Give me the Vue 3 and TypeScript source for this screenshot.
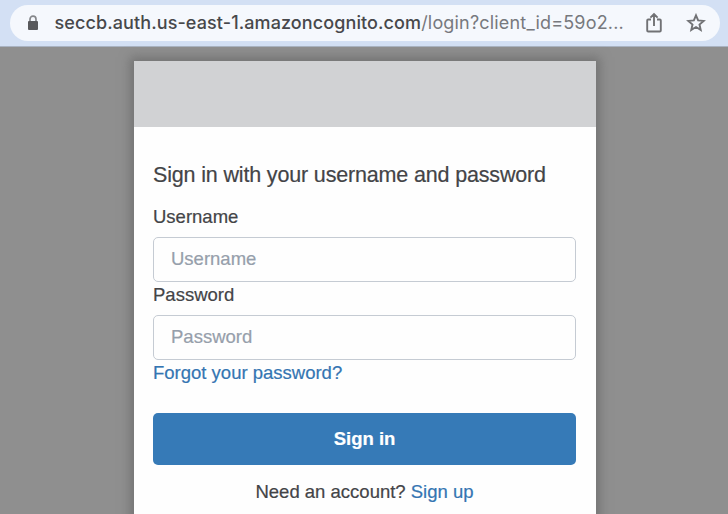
<script setup lang="ts">
import { ref } from 'vue'

const host = 'seccb.auth.us-east-1.amazoncognito.com'
const path = '/login?client_id=59o2...'
const username = ref('')
const password = ref('')
</script>

<template>
  <div class="window">
    <header class="toolbar">
      <div class="address">
        <svg class="lock" viewBox="0 0 12 16" width="12" height="16">
          <path d="M3 7V4.2a3 3 0 0 1 6 0V7" fill="none" stroke="#85878b" stroke-width="1.7" />
          <rect x="1" y="6" width="10" height="9" rx="1" fill="#58595c" />
        </svg>
        <div class="url"><span class="host">{{ host }}</span><span class="path">{{ path }}</span></div>
        <svg class="share" viewBox="0 0 18 22" width="18" height="22">
          <path d="M6 7.5H3.2a1 1 0 0 0-1 1v10a1 1 0 0 0 1 1h11.6a1 1 0 0 0 1-1v-10a1 1 0 0 0-1-1H12M9 14V2.5M5.4 5.6 9 2l3.6 3.6" fill="none" stroke="#717275" stroke-width="1.9" />
        </svg>
        <svg class="star" viewBox="0 0 20 20" width="20" height="20">
          <path d="m10 2.3 2.15 5.1 5.5.48-4.17 3.63 1.25 5.4L10 14.05l-4.73 2.86 1.25-5.4L2.35 7.88l5.5-.48Z" fill="none" stroke="#717275" stroke-width="1.9" />
        </svg>
      </div>
    </header>
    <main class="page">
      <section class="card">
        <div class="banner"></div>
        <form class="form" @submit.prevent>
          <h1 class="title">Sign in with your username and password</h1>
          <label class="label" for="username">Username</label>
          <input id="username" v-model="username" class="field" type="text" placeholder="Username" />
          <label class="label" for="password">Password</label>
          <input id="password" v-model="password" class="field" type="password" placeholder="Password" />
          <a class="link forgot" href="#">Forgot your password?</a>
          <button class="submit" type="submit">Sign in</button>
          <p class="signup">Need an account? <a class="link" href="#">Sign up</a></p>
        </form>
      </section>
    </main>
  </div>
</template>

<style>
body {
  margin: 0;
  overflow: hidden;
}
</style>

<style scoped>
.window {
  display: flex;
  flex-direction: column;
  width: 728px;
  height: 514px;
  overflow: hidden;
  font-family: "Liberation Sans", Arial, sans-serif;
  color: #434447;
  -webkit-text-stroke-width: 0.2px;
}
.toolbar {
  box-sizing: border-box;
  flex: none;
  height: 47px;
  padding: 5px 8px 5px 10px;
  background: #d3e0f4;
  border-bottom: 1px solid #a9b3c2;
}
.address {
  display: flex;
  align-items: center;
  box-sizing: border-box;
  height: 36px;
  padding: 0 14px 0 17px;
  border-radius: 18px;
  background: #f5f8fd;
}
.lock {
  flex: none;
  margin-right: 15.5px;
}
.url {
  flex: 1;
  font-family: Inter, Roboto, sans-serif;
  font-size: 18px;
  line-height: 36px;
  white-space: nowrap;
  -webkit-text-stroke-width: 0;
}
.host {
  color: #47484b;
  font-weight: 500;
  letter-spacing: 0.1px;
}
.path {
  color: #77797e;
  letter-spacing: 0.18px;
}
.share {
  flex: none;
  margin-right: 23px;
}
.star {
  flex: none;
}
.page {
  flex: 1;
  display: flex;
  justify-content: center;
  padding-top: 14px;
  background: #8f8f8f;
}
.card {
  width: 462.5px;
  height: 520px;
  margin-left: 1.5px;
  background: #fefefe;
  box-shadow: 0 0 10px 4px #737373;
}
.banner {
  height: 66px;
  background: #d1d2d4;
}
.form {
  display: flex;
  flex-direction: column;
  padding: 34px 20px 0 19.5px;
}
.title {
  margin: 0;
  font-size: 21.5px;
  font-weight: 400;
  line-height: 28px;
  letter-spacing: -0.16px;
  white-space: nowrap;
}
.label {
  font-size: 18.5px;
  line-height: 25px;
}
.title + .label {
  margin-top: 15px;
}
.field {
  box-sizing: border-box;
  width: 423px;
  height: 45px;
  margin: 8px 0 0;
  padding: 0 17px 2px;
  border: 1px solid #c5cbd3;
  border-radius: 5px;
  outline: none;
  background: #fefefe;
  font: 18.5px "Liberation Sans", Arial, sans-serif;
  color: #434447;
}
.field::placeholder {
  color: #969fab;
  opacity: 1;
}
.link {
  color: #3475b2;
  text-decoration: none;
}
.forgot {
  font-size: 18.5px;
  line-height: 25px;
}
.submit {
  width: 423px;
  height: 52px;
  margin-top: 28px;
  padding: 0;
  border: 0;
  border-radius: 5px;
  background: #367ab7;
  color: #fff;
  font: bold 18.5px "Liberation Sans", Arial, sans-serif;
}
.signup {
  margin: 14px 0 0;
  font-size: 18.5px;
  line-height: 25px;
  text-align: center;
}
</style>
